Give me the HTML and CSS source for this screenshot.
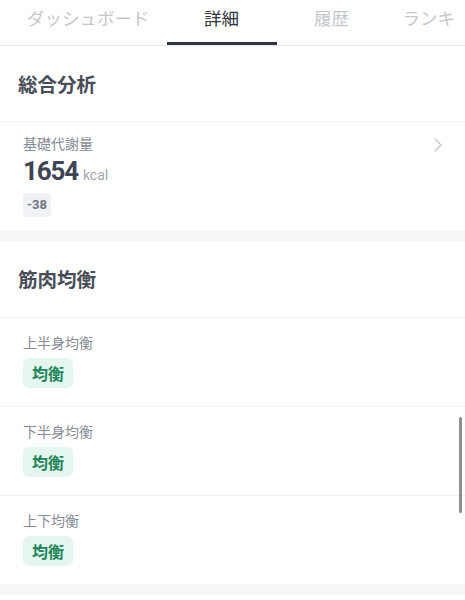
FILE: index.html
```html
<!DOCTYPE html>
<html lang="ja">
<head>
    <meta charset="UTF-8">
    <meta name="viewport" content="width=device-width, initial-scale=1.0">
    <title>詳細</title>
    <link rel="stylesheet" href="styles.css">
</head>
<body>
    <div class="tabs">
        <div class="tab">ダッシュボード</div>
        <div class="tab active">詳細</div>
        <div class="tab">履歴</div>
        <div class="tab edge">ランキ</div>
    </div>

    <div class="section-title">総合分析</div>
    <div class="metric">
        <div class="metric-head">
            <span class="label">基礎代謝量</span>
            <svg class="chevron" width="8" height="14" viewBox="0 0 8 14">
                <polyline points="1,1 7,7 1,13" fill="none" stroke="#c3c7cd" stroke-width="1.4" stroke-linecap="round" stroke-linejoin="round"/>
            </svg>
        </div>
        <div class="value">1654<span class="unit">kcal</span></div>
        <span class="diff">-38</span>
    </div>

    <div class="spacer"></div>

    <div class="section-title tall">筋肉均衡</div>
    <div class="item">
        <div class="label">上半身均衡</div>
        <span class="status">均衡</span>
    </div>
    <div class="item">
        <div class="label">下半身均衡</div>
        <span class="status">均衡</span>
    </div>
    <div class="item last">
        <div class="label">上下均衡</div>
        <span class="status">均衡</span>
    </div>

    <div class="spacer small"></div>

    <div class="scrollbar"></div>
</body>
</html>
```

FILE: styles.css
```css
* {
    box-sizing: border-box;
}

body {
    margin: 0;
    background: #fff;
    font-family: Roboto, "Noto Sans CJK JP", sans-serif;
    color: #3b404a;
    overflow: hidden;
}

.tabs {
    display: flex;
    height: 46px;
    padding-left: 10px;
    border-bottom: 1px solid #e7e9ec;
    overflow: hidden;
    white-space: nowrap;
}

.tab {
    flex-shrink: 0;
    min-width: 110px;
    padding: 0 17px;
    height: 45px;
    line-height: 36px;
    text-align: center;
    font-size: 17.5px;
    color: #c4c7cc;
    font-family: "Noto Sans CJK JP", sans-serif;
}

.tab.active {
    color: #2f333b;
    border-bottom: 3px solid #30343e;
}

.tab.edge {
    min-width: 0;
    padding: 0 0 0 16px;
}

.section-title {
    height: 76px;
    line-height: 75px;
    padding-left: 18px;
    font-size: 19.5px;
    font-weight: 700;
    color: #484d57;
    font-family: "Noto Sans CJK JP", sans-serif;
    border-bottom: 1px solid #f0f1f3;
}

.section-title.tall {
    height: 77px;
    line-height: 75px;
}

.metric {
    padding: 11px 23px 14px;
}

.metric-head {
    display: flex;
    justify-content: space-between;
    align-items: center;
}

.chevron {
    margin-top: 3px;
}

.label {
    font-size: 14px;
    line-height: 20px;
    color: #868c96;
    font-family: "Noto Sans CJK JP", sans-serif;
}

.value {
    margin-top: 3px;
    font-size: 26px;
    line-height: 30px;
    font-weight: 700;
    letter-spacing: -1.2px;
    color: #3e4454;
}

.unit {
    margin-left: 5px;
    font-size: 14px;
    font-weight: 400;
    letter-spacing: 0;
    color: #a3a8b0;
}

.diff {
    display: inline-block;
    margin-top: 3px;
    height: 24px;
    line-height: 24px;
    padding: 0 4px;
    border-radius: 4px;
    background: #f1f2f5;
    color: #6f7581;
    font-size: 13px;
    font-weight: 700;
}

.spacer {
    height: 10px;
    background: #f5f6f8;
}

.spacer.small {
    height: 11px;
}

.item {
    padding: 14px 23px 18px;
    border-bottom: 1px solid #f0f1f3;
}

.item.last {
    border-bottom: none;
}

.status {
    display: inline-block;
    margin-top: 6px;
    height: 30px;
    line-height: 30px;
    padding: 0 9px;
    border-radius: 6px;
    background: #e4f6ed;
    color: #20855a;
    font-size: 16px;
    font-weight: 700;
    font-family: "Noto Sans CJK JP", sans-serif;
}

.scrollbar {
    position: absolute;
    right: 3px;
    top: 417px;
    width: 3px;
    height: 96px;
    border-radius: 2px;
    background: #8f8f8f;
}
```
